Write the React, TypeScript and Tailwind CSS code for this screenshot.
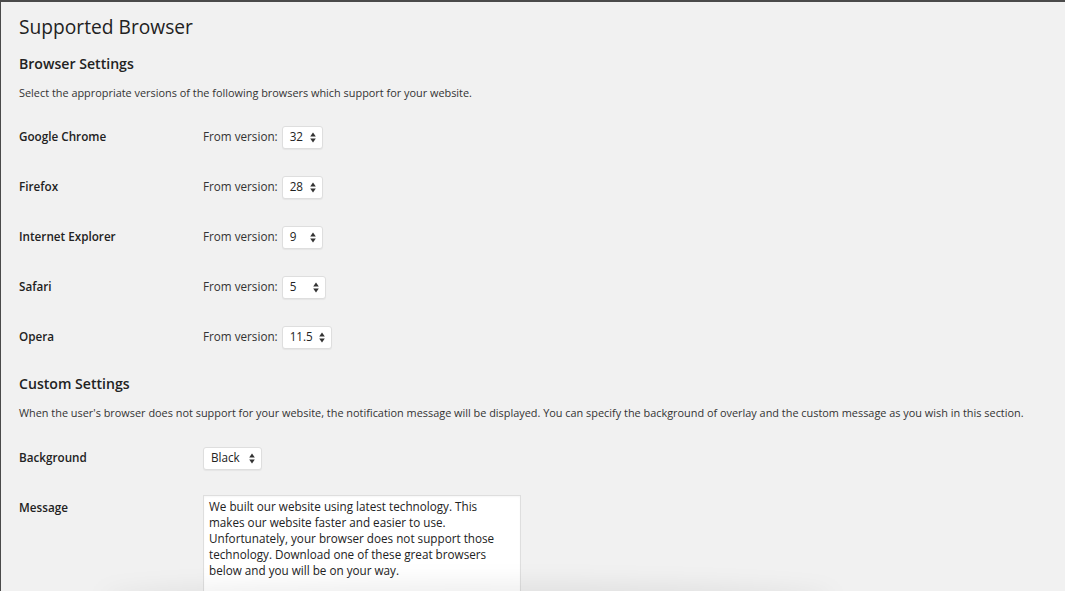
import React from 'react'

const browsers = [
  { name: 'Google Chrome', version: '32', w: 'w-[41px]' },
  { name: 'Firefox', version: '28', w: 'w-[41px]' },
  { name: 'Internet Explorer', version: '9', w: 'w-[41px]' },
  { name: 'Safari', version: '5', w: 'w-[44px]' },
  { name: 'Opera', version: '11.5', w: 'w-[50px]' },
]

function Arrows() {
  return (
    <svg width="6" height="11" viewBox="0 0 6 11" className="shrink-0">
      <path d="M3 0.5 L5.8 4.5 L0.2 4.5 Z" fill="#333" />
      <path d="M3 10.5 L5.8 6.5 L0.2 6.5 Z" fill="#333" />
    </svg>
  )
}

function FakeSelect({ value, w }: { value: string; w: string }) {
  return (
    <div
      className={`${w} h-[23px] flex items-center justify-between pl-[7px] pr-[6px] bg-white border border-[#dedede] rounded-[3px] shadow-[0_1px_1px_rgba(0,0,0,0.05)] text-[11.7px] text-[#222]`}
    >
      <span>{value}</span>
      <Arrows />
    </div>
  )
}

export default function App() {
  return (
    <div
      className="relative w-[1065px] h-[591px] overflow-hidden bg-[#f1f1f1] border-t-2 border-l border-[#4a4a4a] text-[#222]"
      style={{ fontFamily: '"Open Sans", "Noto Sans", sans-serif' }}
    >
      <div className="pl-[18px] pt-[12px]">
        <h1 className="text-[19.2px] leading-[26px] text-[#222]">Supported Browser</h1>

        <h2 className="mt-[14px] text-[14.1px] leading-[20px] font-semibold">Browser Settings</h2>
        <p className="mt-[11px] text-[10.9px] leading-[16px] text-[#333]">
          Select the appropriate versions of the following browsers which support for your website.
        </p>

        <div className="mt-[11px] flex flex-col">
          {browsers.map((b) => (
            <div key={b.name} className="flex items-center h-[50px]">
              <div className="w-[184px] text-[11.7px] font-semibold">{b.name}</div>
              <div className="flex items-center gap-[4px]">
                <span className="text-[11.7px] text-[#333]">From version:</span>
                <FakeSelect value={b.version} w={b.w} />
              </div>
            </div>
          ))}
        </div>

        <h2 className="mt-[12px] text-[14.1px] leading-[20px] font-semibold">Custom Settings</h2>
        <p className="mt-[11px] text-[10.9px] leading-[16px] text-[#333] whitespace-nowrap">
          When the user's browser does not support for your website, the notification message will be displayed. You can
          specify the background of overlay and the custom message as you wish in this section.
        </p>

        <div className="mt-[12px] flex items-center h-[50px]">
          <div className="w-[184px] text-[11.7px] font-semibold">Background</div>
          <FakeSelect value="Black" w="w-[59px]" />
        </div>

        <div className="mt-[12px] flex items-start">
          <div className="w-[184px] pt-[4px] text-[11.7px] font-semibold">Message</div>
          <div className="w-[318px] h-[120px] bg-white border border-[#dedede] px-[5px] py-[2px] text-[11.7px] leading-[16px] text-[#222] shadow-[inset_0_1px_2px_rgba(0,0,0,0.04)]">
            We built our website using latest technology. This makes our website faster and easier to use. Unfortunately,
            your browser does not support those technology. Download one of these great browsers below and you will be on
            your way.
          </div>
        </div>
      </div>

      <div className="pointer-events-none absolute left-[100px] right-[230px] bottom-[-20px] h-[30px] rounded-[50%] bg-[rgba(0,0,0,0.06)] blur-[10px]" />
    </div>
  )
}
